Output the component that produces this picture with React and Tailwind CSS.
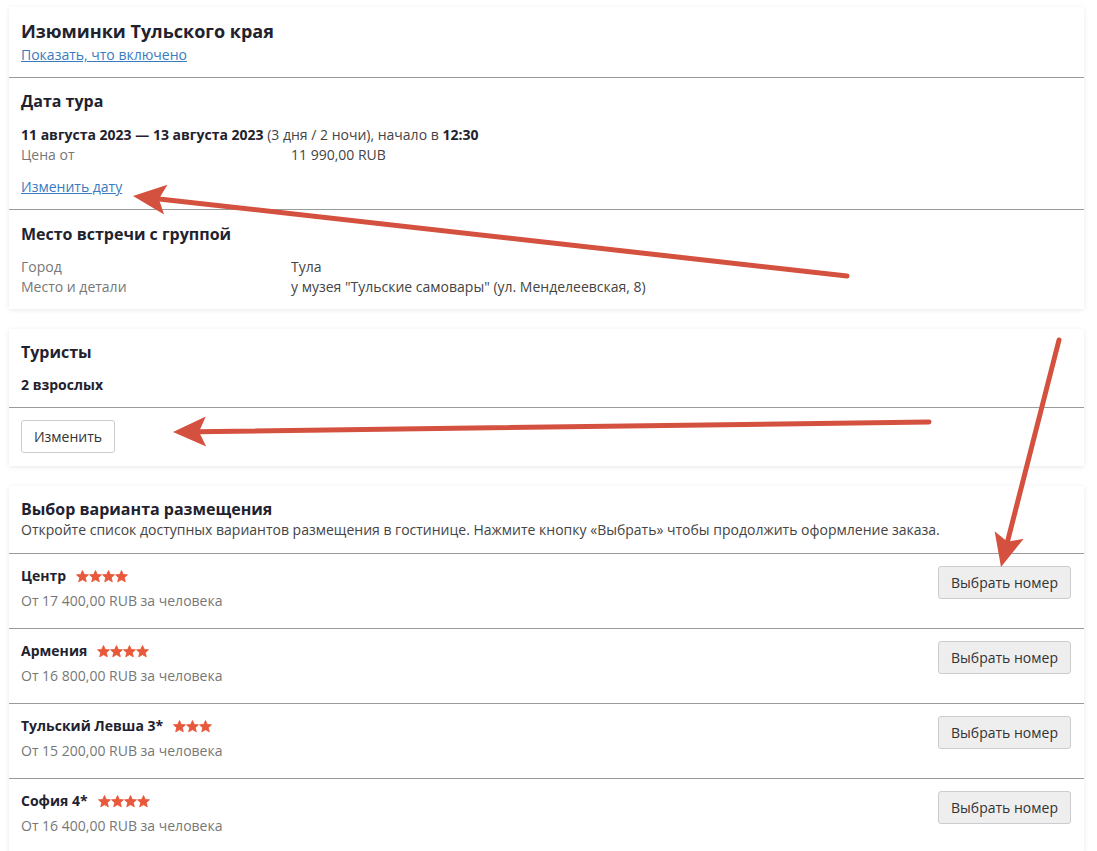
import React from "react";

const RED = "#d5513f";

function Arrow({ tail, tip }) {
  const dx = tail[0] - tip[0];
  const dy = tail[1] - tip[1];
  const len = Math.hypot(dx, dy);
  const ux = dx / len, uy = dy / len;
  const nx = -uy, ny = ux;
  const L = 33, W = 15, N = 26;
  const p1 = [tip[0] + ux * L + nx * W, tip[1] + uy * L + ny * W];
  const p2 = [tip[0] + ux * N, tip[1] + uy * N];
  const p3 = [tip[0] + ux * L - nx * W, tip[1] + uy * L - ny * W];
  const start = [tip[0] + ux * 24, tip[1] + uy * 24];
  return (
    <g>
      <line x1={start[0]} y1={start[1]} x2={tail[0]} y2={tail[1]} stroke={RED} strokeWidth="5" strokeLinecap="round" />
      <polygon points={`${tip[0]},${tip[1]} ${p1[0]},${p1[1]} ${p2[0]},${p2[1]} ${p3[0]},${p3[1]}`} fill={RED} />
    </g>
  );
}

function Stars({ n }) {
  return (
    <span className="inline-flex items-center ml-[10px]">
      {Array.from({ length: n }).map((_, i) => (
        <svg key={i} width="13" height="13" viewBox="0 0 24 24">
          <path d="M12 1l3.3 7.2 7.7.7-5.8 5.2 1.8 7.7L12 17.8l-7 4 1.8-7.7L1 8.9l7.7-.7z" fill="#e8583a" stroke="#e8583a" strokeWidth="1.5" strokeLinejoin="round" />
        </svg>
      ))}
    </span>
  );
}

const Divider = () => <div className="h-px bg-[#9a9a9a]" />;

const hotels = [
  { name: "Центр", stars: 4, price: "От 17 400,00 RUB за человека" },
  { name: "Армения", stars: 4, price: "От 16 800,00 RUB за человека" },
  { name: "Тульский Левша 3*", stars: 3, price: "От 15 200,00 RUB за человека" },
  { name: "София 4*", stars: 4, price: "От 16 400,00 RUB за человека" },
];

export default function App() {
  return (
    <div className="relative w-[1097px] h-[851px] overflow-hidden bg-white text-[14px] text-[#333]" style={{ fontFamily: '"Open Sans", "Liberation Sans", sans-serif' }}>
      <div className="flex flex-col gap-5 pl-[9px] pr-[13px] pt-[7px]">
        {/* Card 1 */}
        <div className="bg-white shadow-[0_1px_5px_rgba(0,0,0,0.09)]">
          <div className="px-3 pt-3 pb-[13px]">
            <div className="text-[18px] leading-[24px] font-bold text-[#22222e]">Изюминки Тульского края</div>
            <a className="block mt-[3px] leading-[18px] text-[#3a7bbf] underline">Показать, что включено</a>
          </div>
          <Divider />
          <div className="px-3 pt-3 pb-3">
            <div className="text-[16px] leading-[22px] font-bold text-[#22222e]">Дата тура</div>
            <div className="mt-[13px] leading-[20px] text-[#22222e]">
              <b>11 августа 2023 — 13 августа 2023</b> <span className="text-[#444]">(3 дня / 2 ночи), начало в</span> <b>12:30</b>
            </div>
            <div className="flex leading-[20px]">
              <div className="w-[270px] text-[#777]">Цена от</div>
              <div className="text-[#444]">11 990,00 RUB</div>
            </div>
            <a className="block mt-3 leading-[20px] text-[#3a7bbf] underline">Изменить дату</a>
          </div>
          <Divider />
          <div className="px-3 pt-[13px] pb-3">
            <div className="text-[16px] leading-[22px] font-bold text-[#22222e]">Место встречи с группой</div>
            <div className="mt-3 flex leading-[20px]">
              <div className="w-[270px] text-[#777]">Город</div>
              <div className="text-[#444]">Тула</div>
            </div>
            <div className="flex leading-[20px]">
              <div className="w-[270px] text-[#777]">Место и детали</div>
              <div className="text-[#444]">у музея "Тульские самовары" (ул. Менделеевская, 8)</div>
            </div>
          </div>
        </div>

        {/* Card 2 */}
        <div className="bg-white shadow-[0_1px_5px_rgba(0,0,0,0.09)]">
          <div className="px-3 pt-3 pb-3">
            <div className="text-[16px] leading-[22px] font-bold text-[#22222e]">Туристы</div>
            <div className="mt-3 leading-[20px] font-bold text-[#22222e]">2 взрослых</div>
          </div>
          <Divider />
          <div className="px-3 pt-3 pb-[13px]">
            <button className="h-[33px] w-[94px] rounded-[3px] border border-[#ccc] bg-white text-[14px] text-[#333]">Изменить</button>
          </div>
        </div>

        {/* Card 3 */}
        <div className="bg-white shadow-[0_1px_5px_rgba(0,0,0,0.09)]">
          <div className="px-3 pt-3 pb-[13px]">
            <div className="text-[16px] leading-[22px] font-bold text-[#22222e]">Выбор варианта размещения</div>
            <div className="leading-[20px] text-[#444]">Откройте список доступных вариантов размещения в гостинице. Нажмите кнопку «Выбрать» чтобы продолжить оформление заказа.</div>
          </div>
          {hotels.map((h) => (
            <div key={h.name}>
              <Divider />
              <div className="flex justify-between pl-3 pr-[13px] pt-3 pb-[17px]">
                <div>
                  <div className="flex items-center leading-[20px] font-bold text-[#22222e]">
                    {h.name}
                    <Stars n={h.stars} />
                  </div>
                  <div className="mt-[5px] leading-[20px] text-[#777]">{h.price}</div>
                </div>
                <button className="h-[33px] w-[133px] rounded-[3px] border border-[#ccc] bg-[#eee] text-[14px] text-[#333]">Выбрать номер</button>
              </div>
            </div>
          ))}
        </div>
      </div>

      <svg className="absolute inset-0 pointer-events-none" width="1097" height="851">
        <Arrow tail={[847, 276]} tip={[133, 196]} />
        <Arrow tail={[929, 422]} tip={[173, 432]} />
        <Arrow tail={[1059, 340]} tip={[1001, 567]} />
      </svg>
    </div>
  );
}
